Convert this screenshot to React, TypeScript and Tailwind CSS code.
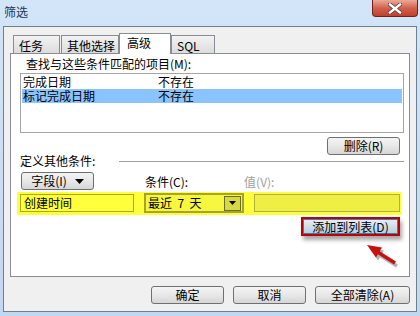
import React from "react";

const btn =
	"flex items-center justify-center h-[18px] rounded-[3px] border border-[#707070] bg-gradient-to-b from-[#f4f4f4] via-[#e8e8e8] to-[#d6d6d6] text-[12px] leading-[14px]";

function Tab({ label, active, w }: { label: string; active?: boolean; w: string }) {
	if (active) {
		return (
			<div
				className={`${w} h-[21px] bg-white border border-b-0 border-[#898c95] pl-[7px] pt-[2px] leading-[14px] relative z-10`}
			>
				{label}
			</div>
		);
	}
	return (
		<div
			className={`${w} h-[18px] mb-px border border-b-0 border-[#898c95] bg-gradient-to-b from-[#f3f3f3] to-[#dcdcdc] pl-[5px] pt-[3px] leading-[14px]`}
		>
			{label}
		</div>
	);
}

function Row({ name, value, selected }: { name: string; value: string; selected?: boolean }) {
	return (
		<div className={`flex h-[14px] pl-[1px] leading-[14px] ${selected ? "bg-[#8bc3ff]" : ""}`}>
			<span className="w-[135px]">{name}</span>
			<span>{value}</span>
		</div>
	);
}

export default function App() {
	return (
		<div className="w-[420px] h-[316px] relative overflow-hidden bg-gradient-to-b from-[#d3e5f8] to-[#c2d8f0] text-black text-[12px] leading-[14px] font-['Noto_Sans_CJK_SC',sans-serif]">
			{/* title bar */}
			<div className="h-[26px] flex justify-between">
				<div className="pl-[4px] pt-[5px] text-[#1e3557]">筛选</div>
				<div className="mr-[2px] w-[46px] h-[17px] rounded-b-[4px] border border-t-0 border-[#6e2418] bg-gradient-to-b from-[#e9a99a] via-[#d2604c] to-[#c0402e] flex items-center justify-center">
					<svg width="14" height="11" viewBox="0 0 14 11">
						<path
							d="M2 1.5 L12 9.5 M12 1.5 L2 9.5"
							stroke="#5a3a36"
							strokeWidth="4"
							strokeLinecap="square"
						/>
						<path
							d="M2 1.5 L12 9.5 M12 1.5 L2 9.5"
							stroke="#ffffff"
							strokeWidth="2.4"
							strokeLinecap="square"
						/>
					</svg>
				</div>
			</div>

			{/* dialog body */}
			<div className="ml-[3px] w-[414px] h-[286px] border border-[#6f7f92] bg-[#f0f0f0] pl-[6px] pt-[6px]">
				{/* tabs */}
				<div className="flex items-end h-[21px] -mb-px pl-[3px] relative z-10">
					<Tab label="任务" w="w-[47px]" />
					<div className="w-[1px]" />
					<Tab label="其他选择" w="w-[58px]" />
					<Tab label="高级" active w="w-[52px]" />
					<Tab label="SQL" w="w-[44px]" />
				</div>

				{/* tab panel */}
				<div className="w-[400px] h-[224px] border border-[#898c95] bg-white">
					<div className="pl-[15px] pt-[3px] h-[17px]">查找与这些条件匹配的项目(M):</div>
					<div className="ml-[9px] mt-[2px] w-[384px] h-[60px] border border-[#a5a5a5] bg-white px-[1px] pt-[1px]">
						<Row name="完成日期" value="不存在" />
						<Row name="标记完成日期" value="不存在" selected />
					</div>
					<div className="flex justify-end mt-[4px] pr-[9px]">
						<div className={`${btn} w-[73px]`}>删除(R)</div>
					</div>
					<div className="flex items-center h-[14px] -mt-[1px] pl-[9px] pr-[5px]">
						<span>定义其他条件:</span>
						<div className="flex-1 ml-[24px] h-px bg-[#a0a0a0]" />
					</div>
					<div className="flex items-end mt-[4px] pl-[10px] h-[18px]">
						<div className={`${btn} w-[73px] gap-[8px]`}>
							<span>字段(I)</span>
							<svg width="9" height="5" viewBox="0 0 9 5">
								<path d="M0 0 H9 L4.5 5 Z" fill="#000" />
							</svg>
						</div>
						<span className="ml-[51px] mb-[1px]">条件(C):</span>
						<span className="ml-[56px] mb-[1px] text-[#a0a0a0]">值(V):</span>
					</div>
					<div className="flex mt-[2px] ml-[6px] w-[384px] h-[23px] bg-[#ffff3c] pl-[3px] pt-[2px]">
						<div className="w-[114px] h-[18px] border border-[#a8a82a] bg-[#ffff3c] pl-[3px] leading-[16px]">
							创建时间
						</div>
						<div className="ml-[10px] -mt-px w-[100px] h-[20px] border-2 border-[#a4a42e] bg-[#f7f740] flex items-center justify-between pl-[2px] pr-[1px]">
							<span className="whitespace-pre">最近  7  天</span>
							<div className="w-[17px] h-[15px] border border-[#6c6c30] bg-[#d8d840] flex items-center justify-center">
								<svg width="7" height="4" viewBox="0 0 7 4">
									<path d="M0 0 H7 L3.5 4 Z" fill="#000" />
								</svg>
							</div>
						</div>
						<div className="ml-[10px] w-[146px] h-[18px] border border-[#b0b04a] bg-[#eeee44]" />
					</div>
					<div className="flex justify-end mt-[2px] pr-[9px]">
						<div className="w-[99px] h-[19px] border-2 border-[#c00000] shadow-[2px_4px_4px_rgba(0,0,0,0.35)]">
							<div className="h-full flex items-center justify-center bg-gradient-to-b from-[#e3eef6] to-[#b8cfdf] border border-[#3c7fb1] leading-[13px]">
								添加到列表(D)
							</div>
						</div>
					</div>
				</div>

				{/* bottom buttons */}
				<div className="flex justify-end gap-[9px] mt-[9px] w-[400px]">
					<div className={`${btn} w-[73px]`}>确定</div>
					<div className={`${btn} w-[73px]`}>取消</div>
					<div className={`${btn} w-[95px]`}>全部清除(A)</div>
				</div>
			</div>

			{/* annotation arrow */}
			<svg
				className="absolute left-0 top-0 pointer-events-none"
				width="420"
				height="316"
				viewBox="0 0 420 316"
			>
				<g opacity="0.3" transform="translate(2 3)">
					<path d="M395 263 L376 251" stroke="#000" strokeWidth="3.5" />
					<path d="M367 245 L382 247.5 L376 257.5 Z" fill="#000" />
				</g>
				<path d="M395 263 L376 251" stroke="#c81010" strokeWidth="3.5" />
				<path d="M367 245 L382 247.5 L376 257.5 Z" fill="#c81010" />
			</svg>
		</div>
	);
}
